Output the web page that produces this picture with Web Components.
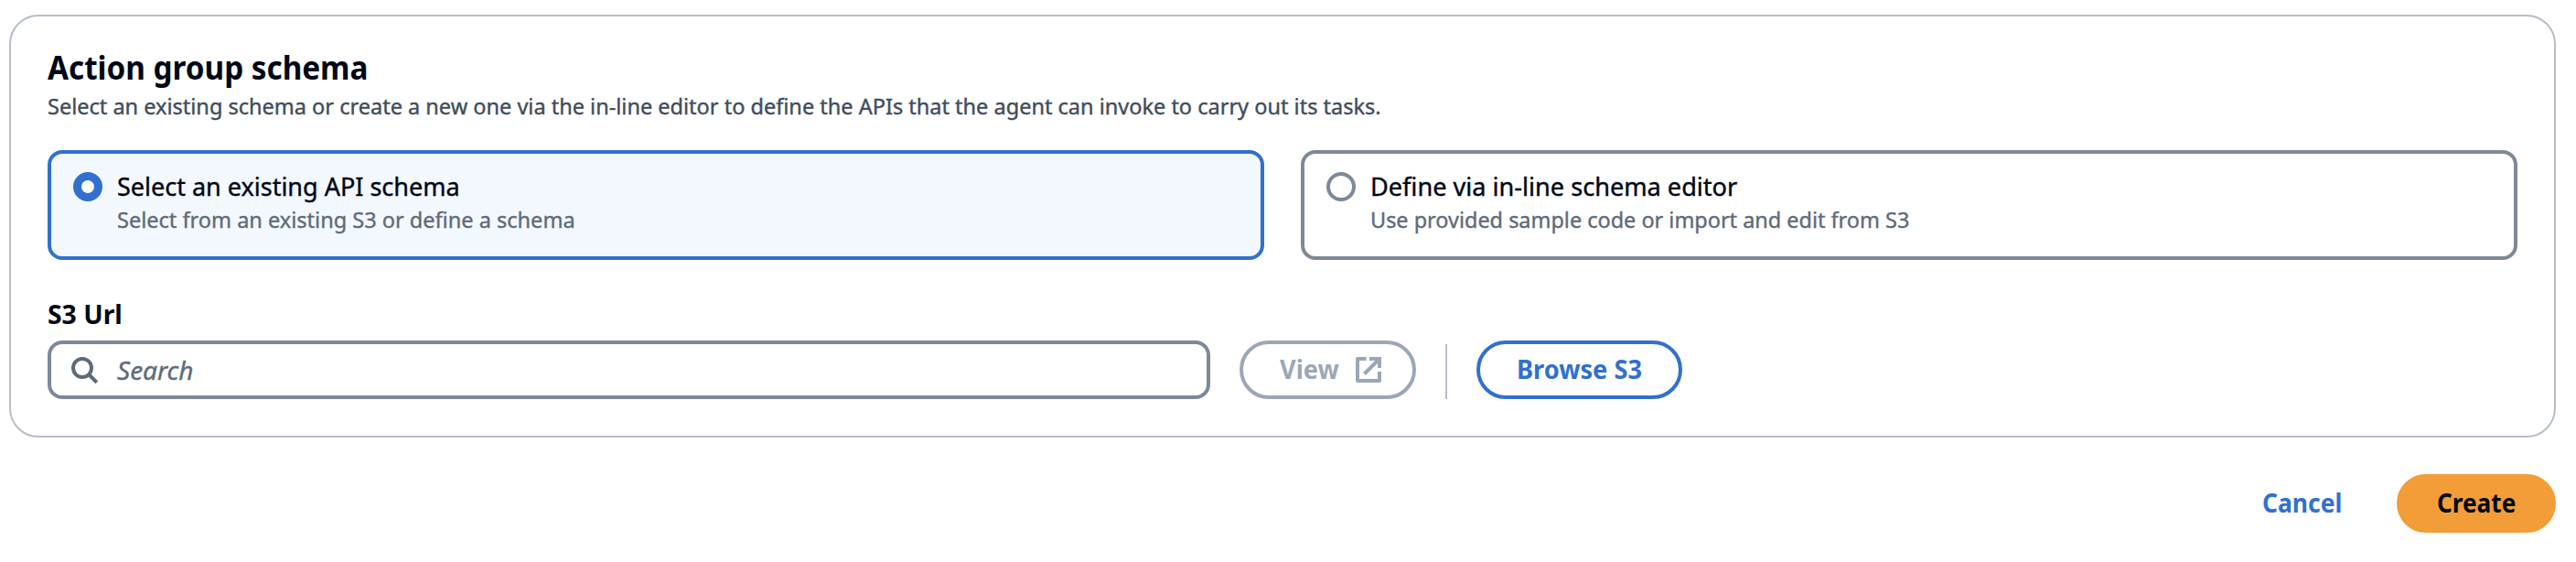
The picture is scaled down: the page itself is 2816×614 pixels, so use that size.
<!DOCTYPE html>
<html lang="en">
<head>
<meta charset="utf-8">
<title>Action group schema</title>
<style>
body{margin:0;background:#fff;font-family:"Noto Sans","Open Sans",sans-serif;color:#000716}
</style>
</head>
<body>
<schema-page></schema-page>
<script>
const define = (name, html, setup) => {
  const template = document.createElement('template');
  template.innerHTML = html;
  customElements.define(name, class extends HTMLElement {
    connectedCallback() {
      if (this.shadowRoot) return;
      this.attachShadow({ mode: 'open' }).append(template.content.cloneNode(true));
      if (setup) setup(this);
    }
  });
};

/* A single line of text condensed horizontally to a given advance width. */
define('fit-text', `<style>
:host{display:block;white-space:nowrap}
span{display:inline-block;transform-origin:0 50%}
:host([medium]) span{-webkit-text-stroke:.4px currentColor}
</style><span><slot></slot></span>`, el => {
  const span = el.shadowRoot.querySelector('span');
  const width = +el.getAttribute('width');
  span.style.transform = `scaleX(${width / span.offsetWidth})`;
  el.style.width = width + 'px';
});

define('option-tile', `<style>
:host{display:flex;box-sizing:border-box;height:120px;border:4px solid #7d8998;border-radius:16px;padding:20px 24px;gap:16px;background:#fff}
:host([selected]){border-color:#3170ce;background:#f2f8fd}
i{box-sizing:border-box;width:32px;height:32px;border:4px solid #7d8998;border-radius:50%;flex:none;background:#fff}
:host([selected]) i{border:9px solid #3170ce}
.label{font-size:28px;line-height:40px;margin:-5px 0 1px}
.desc{font-size:24px;line-height:32px;color:#5f6b7a}
</style><i></i><div><div class="label"><slot></slot></div><div class="desc"><slot name="description"></slot></div></div>`);

define('search-input', `<style>
:host{display:flex;align-items:center;box-sizing:border-box;width:1271px;height:64px;border:4px solid #7d8998;border-radius:16px;padding-left:20px;gap:20px;font-size:28px;line-height:40px;font-style:italic;color:#5f6b7a}
svg{flex:none}
</style><svg width="32" height="32" viewBox="0 0 32 32" fill="none" stroke="#5f6b7a" stroke-width="4"><circle cx="14" cy="14" r="10"/><path d="M21 21L29.800 29.800"/></svg><slot></slot>`);

define('pill-button', `<style>
:host{display:flex;align-items:center;justify-content:center;box-sizing:border-box;height:64px;border:4px solid #3170ce;border-radius:32px;padding-bottom:2px;font-size:28px;line-height:40px;font-weight:700;color:#3170ce;gap:16px}
:host([disabled]){border-color:#9ba7b6;color:#9ba7b6}
:host([primary]){border-color:#f29d38;background:#f29d38;color:#000716}
:host([link]){border-color:transparent}
</style><slot></slot><slot name="icon"></slot>`);

define('external-icon', `<style>:host{display:block;width:32px;height:32px;margin-top:2px}svg{display:block}</style>
<svg width="32" height="32" viewBox="0 0 32 32" fill="none" stroke="currentColor" stroke-width="4"><path d="M13.500 4H4V28H28V18" stroke-linejoin="round"/><path d="M17 4H28V14M27 5L11.500 20.500"/></svg>`);

define('schema-panel', `<style>
:host{display:block;box-sizing:border-box;height:462px;border:2px solid #b6bec9;border-radius:32px;padding:32px 40px 0;background:#fff}
h2{margin:0;font-size:36px;line-height:47px}
.sub{font-size:24px;line-height:36px;color:#414d5c;margin-top:1px}
.tiles{display:grid;grid-template-columns:1fr 1fr;gap:40px;margin-top:30px}
.name{font-size:28px;line-height:40px;font-weight:700;margin-top:39px}
.row{display:flex;align-items:center;margin-top:9px}
.view{width:193px;margin-left:32px;padding-left:8px}
.rule{width:2px;height:60px;background:#b6bec9;margin:4px 32px 0}
.browse{width:225px}
</style>
<h2><fit-text width="350">Action group schema</fit-text></h2>
<div class="sub"><fit-text medium width="1458">Select an existing schema or create a new one via the in-line editor to define the APIs that the agent can invoke to carry out its tasks.</fit-text></div>
<div class="tiles">
<option-tile selected><fit-text medium width="375">Select an existing API schema</fit-text><fit-text medium slot="description" width="501">Select from an existing S3 or define a schema</fit-text></option-tile>
<option-tile><fit-text medium width="401">Define via in-line schema editor</fit-text><fit-text medium slot="description" width="589">Use provided sample code or import and edit from S3</fit-text></option-tile>
</div>
<div class="name"><fit-text width="82">S3 Url</fit-text></div>
<div class="row">
<search-input><fit-text medium width="84">Search</fit-text></search-input>
<pill-button class="view" disabled><fit-text width="65">View</fit-text><external-icon slot="icon"></external-icon></pill-button>
<div class="rule"></div>
<pill-button class="browse"><fit-text width="137">Browse S3</fit-text></pill-button>
</div>`);

define('schema-page', `<style>
:host{display:block;box-sizing:border-box;width:2816px;height:614px;padding:16px 22px 0 10px}
footer{display:flex;justify-content:flex-end;gap:16px;margin-top:40px}
.cancel{width:176px}
.create{width:174px}
</style>
<schema-panel></schema-panel>
<footer><pill-button link class="cancel"><fit-text width="87">Cancel</fit-text></pill-button><pill-button primary class="create"><fit-text width="86">Create</fit-text></pill-button></footer>`);
</script>
</body>
</html>
